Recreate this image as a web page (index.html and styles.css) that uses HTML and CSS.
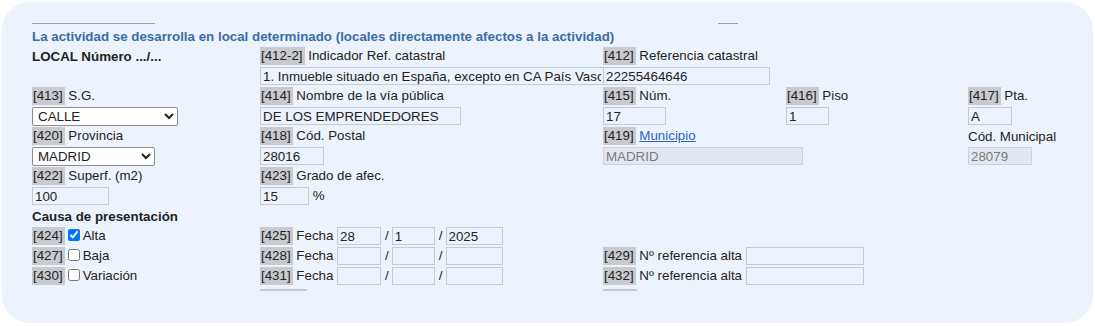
FILE: index.html
```html
<!DOCTYPE html>
<html lang="es">
<head>
  <meta charset="UTF-8">
  <meta name="viewport" content="width=device-width, initial-scale=1.0">
  <title>Local determinado</title>
  <link rel="stylesheet" href="styles.css">
</head>
<body>
  <section class="panel">
    <div class="rules">
      <span class="rule rule-left"></span>
      <span class="rule rule-right"></span>
    </div>

    <div class="form-grid">
      <div class="title span-all">La actividad se desarrolla en local determinado (locales directamente afectos a la actividad)</div>

      <div class="c1 strong">LOCAL Número .../...</div>
      <div class="c2"><span class="code">[412-2]</span> Indicador Ref. catastral</div>
      <div class="c3 span-rest"><span class="code">[412]</span> Referencia catastral</div>

      <div class="c2"><input type="text" class="field w-inmueble" value="1. Inmueble situado en España, excepto en CA País Vasco y Navarra"></div>
      <div class="c3 span-rest"><input type="text" class="field w-refcat" value="22255464646"></div>

      <div class="c1"><span class="code">[413]</span> S.G.</div>
      <div class="c2"><span class="code">[414]</span> Nombre de la vía pública</div>
      <div class="c3"><span class="code">[415]</span> Núm.</div>
      <div class="c4"><span class="code">[416]</span> Piso</div>
      <div class="c5"><span class="code">[417]</span> Pta.</div>

      <div class="c1">
        <select class="select w-sg">
          <option>CALLE</option>
          <option>AVENIDA</option>
          <option>PLAZA</option>
        </select>
      </div>
      <div class="c2"><input type="text" class="field w-via" value="DE LOS EMPRENDEDORES"></div>
      <div class="c3"><input type="text" class="field w-num" value="17"></div>
      <div class="c4"><input type="text" class="field w-piso" value="1"></div>
      <div class="c5"><input type="text" class="field w-pta" value="A"></div>

      <div class="c1"><span class="code">[420]</span> Provincia</div>
      <div class="c2"><span class="code">[418]</span> Cód. Postal</div>
      <div class="c3"><span class="code">[419]</span> <a href="#" class="link">Municipio</a></div>
      <div class="c5">Cód. Municipal</div>

      <div class="c1">
        <select class="select w-prov">
          <option>MADRID</option>
          <option>BARCELONA</option>
        </select>
      </div>
      <div class="c2"><input type="text" class="field w-cp" value="28016"></div>
      <div class="c3"><input type="text" class="field w-mun" value="MADRID" disabled></div>
      <div class="c5"><input type="text" class="field w-codmun" value="28079" disabled></div>

      <div class="c1"><span class="code">[422]</span> Superf. (m2)</div>
      <div class="c2"><span class="code">[423]</span> Grado de afec.</div>

      <div class="c1"><input type="text" class="field w-superf" value="100"></div>
      <div class="c2"><input type="text" class="field w-grado" value="15"> %</div>

      <div class="subtitle span-all">Causa de presentación</div>

      <div class="c1"><span class="code">[424]</span><input type="checkbox" class="check" checked>Alta</div>
      <div class="c2 date-line">
        <span class="code">[425]</span> Fecha
        <input type="text" class="field w-day" value="28"><span class="sep">/</span><input type="text" class="field w-month" value="1"><span class="sep">/</span><input type="text" class="field w-year" value="2025">
      </div>

      <div class="c1"><span class="code">[427]</span><input type="checkbox" class="check">Baja</div>
      <div class="c2 date-line">
        <span class="code">[428]</span> Fecha
        <input type="text" class="field w-day"><span class="sep">/</span><input type="text" class="field w-month"><span class="sep">/</span><input type="text" class="field w-year">
      </div>
      <div class="c3 span-rest"><span class="code">[429]</span> Nº referencia alta <input type="text" class="field w-refalta"></div>

      <div class="c1"><span class="code">[430]</span><input type="checkbox" class="check">Variación</div>
      <div class="c2 date-line">
        <span class="code">[431]</span> Fecha
        <input type="text" class="field w-day"><span class="sep">/</span><input type="text" class="field w-month"><span class="sep">/</span><input type="text" class="field w-year">
      </div>
      <div class="c3 span-rest"><span class="code">[432]</span> Nº referencia alta <input type="text" class="field w-refalta"></div>
    </div>

    <div class="tail">
      <span class="c2 tail-bar tail-fecha"></span>
      <span class="c3 tail-bar tail-ref"></span>
    </div>
  </section>
</body>
</html>
```

FILE: styles.css
```css
* {
  margin: 0;
  padding: 0;
  box-sizing: border-box;
}

body {
  font-family: "Liberation Sans", Arial, sans-serif;
  font-size: 13.33px;
  color: #222;
  background-color: #fff;
  padding: 2px;
}

.panel {
  width: 1091px;
  height: 321px;
  background-color: #edf3fd;
  border-radius: 28px;
  padding: 21px 30px 0 30px;
}

/* top separators */
.rules {
  display: flex;
  height: 3px;
}

.rule {
  display: block;
  border-top: 1px solid #a0a3a8;
}

.rule-left {
  width: 123px;
}

.rule-right {
  width: 20px;
  margin-left: 563px;
}

/* main layout */
.form-grid,
.tail {
  display: grid;
  grid-template-columns: 228px 343px 183px 182px 1fr;
}

.form-grid {
  grid-auto-rows: 20px;
  align-items: center;
  white-space: nowrap;
}

.c1 { grid-column: 1; }
.c2 { grid-column: 2; }
.c3 { grid-column: 3; }
.c4 { grid-column: 4; }
.c5 { grid-column: 5; }

.span-all {
  grid-column: 1 / -1;
}

.span-rest {
  grid-column: 3 / -1;
}

.title {
  color: #3b6ca6;
  font-weight: bold;
}

.strong,
.subtitle {
  font-weight: bold;
}

.code {
  display: inline-block;
  line-height: 18px;
  padding: 0 2px 0 1px;
  background-color: #c8cacf;
}

.link {
  color: #2a63c4;
}

/* fields */
.field {
  height: 18px;
  padding: 0 2px;
  font-family: inherit;
  font-size: 13.33px;
  color: #222;
  background-color: transparent;
  border: 1px solid #c5cad2;
  vertical-align: middle;
}

.field:disabled {
  background-color: #e3e8f0;
  border-color: #cdd2da;
  color: #7a7a7a;
}

.select {
  height: 19px;
  font-family: inherit;
  font-size: 13.33px;
  color: #222;
  padding-left: 1px;
  border: 1px solid #8a8d92;
  border-radius: 2px;
  background-color: #fff;
  vertical-align: middle;
}

.check {
  width: 12px;
  height: 12px;
  margin: 0 3px 0 3px;
  vertical-align: -1px;
}

.w-inmueble { width: 343px; border-right: none; }
.w-refcat { width: 167px; }
.w-sg { width: 146px; }
.w-via { width: 201px; }
.w-num { width: 63px; }
.w-piso { width: 43px; }
.w-pta { width: 44px; }
.w-prov { width: 123px; }
.w-cp { width: 64px; }
.w-mun { width: 200px; }
.w-codmun { width: 64px; }
.w-superf { width: 77px; }
.w-grado { width: 49px; }
.w-day { width: 44px; }
.w-month { width: 43px; }
.w-year { width: 57px; }
.w-refalta { width: 118px; }

.date-line .sep {
  display: inline-block;
  padding: 0 3px 0 4px;
}

/* clipped row below the last line */
.tail {
  height: 6px;
  padding-top: 3px;
}

.tail-bar {
  display: block;
  height: 2px;
  background-color: #c8cacf;
}

.tail-fecha {
  width: 47px;
}

.tail-ref {
  width: 34px;
}
```
